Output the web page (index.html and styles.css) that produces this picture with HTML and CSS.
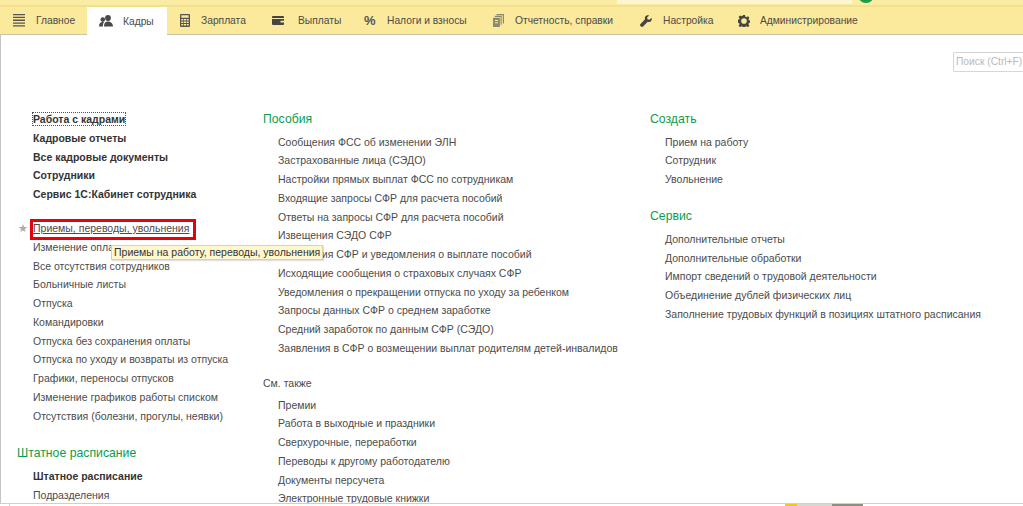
FILE: index.html
```html
<!DOCTYPE html>
<html>
	<head>
		<meta charset="utf-8" />
		<title>Кадры</title>
		<link rel="stylesheet" href="styles.css">
	</head>
	<body>
		<div class="top">
			<div class="top-field"></div>
			<div class="top-dot"></div>
		</div>
		<div class="menu">
			<div class="tab tab1">
				<svg width="12" height="13" viewBox="0 0 12 13"><path d="M0 0h12v1.300H0zM0 2.800h12v1.300H0zM0 5.600h12v1.300H0zM0 8.400h12v1.300H0zM0 11.200h12v1.300H0z" fill="#555"/></svg>
				<span>Главное</span>
			</div>
			<div class="tab tab2 active">
				<svg width="14" height="12" viewBox="0 0 14 12"><circle cx="9" cy="3" r="2.900" fill="#4a4a4a"/><path d="M5 11.500c0-3.600 1.600-5 4-5s4.800 1.400 5 5z" fill="#4a4a4a"/><circle cx="3.800" cy="4.600" r="2.300" fill="#4a4a4a"/><path d="M0 11.500c0-3 1.300-4.500 3.600-4.500.6 0 1 .1 1.400.3-.8 1-1.100 2.300-1.100 4.200z" fill="#4a4a4a"/></svg>
				<span>Кадры</span>
			</div>
			<div class="tab tab3">
				<svg width="10" height="13" viewBox="0 0 10 13"><path d="M1 0h8a1 1 0 0 1 1 1v11a1 1 0 0 1-1 1H1a1 1 0 0 1-1-1V1a1 1 0 0 1 1-1zm.300 1.300v2.400h7.400V1.300zM1.300 5v1.500h2V5zm2.700 0v1.500h2V5zm2.700 0v1.500h2V5zM1.300 7.500V9h2V7.500zm2.700 0V9h2V7.500zm2.700 0V9h2V7.500zM1.300 10v1.500h2V10zm2.700 0v1.500h2V10zm2.700 0v1.500h2V10z" fill="#555" fill-rule="evenodd"/></svg>
				<span>Зарплата</span>
			</div>
			<div class="tab tab4">
				<svg width="12" height="9" viewBox="0 0 12 9"><path d="M1 0h10a1 1 0 0 1 1 1v1H0V1a1 1 0 0 1 1-1zM0 3h12v1.800H8.500v1.700H12V8a1 1 0 0 1-1 1H1a1 1 0 0 1-1-1z" fill="#444"/></svg>
				<span>Выплаты</span>
			</div>
			<div class="tab tab5">
				<span class="percent">%</span>
				<span>Налоги и взносы</span>
			</div>
			<div class="tab tab6">
				<svg width="11" height="13" viewBox="0 0 11 13"><path d="M3.500 0H11v9.500H9.800V1.200H3.500z" fill="#8a8a70"/><path d="M1.800 1.800h6.900v8.900H7.600V3H1.800z" fill="#8a8a70"/><path d="M0 3.700h6.900V13H0zM2 6v1h3V6zm0 2.300v1h3v-1z" fill="#8a8a70" fill-rule="evenodd"/></svg>
				<span>Отчетность, справки</span>
			</div>
			<div class="tab tab7">
				<svg width="12" height="12" viewBox="0 0 14 14"><path d="M13.500 3.200 11 5.600 8.800 5 8.200 2.900 10.700.5C8.800-.2 6.800.4 6 2c-.5 1-.5 2.100-.1 3L.6 10.400a1.800 1.800 0 0 0 0 2.500l.5.500a1.800 1.800 0 0 0 2.500 0L9 8c1 .4 2.100.3 3-.2 1.500-.9 2.100-2.800 1.500-4.600z" fill="#444"/></svg>
				<span>Настройка</span>
			</div>
			<div class="tab tab8">
				<svg width="12" height="12" viewBox="0 0 14 14"><path d="M5.800 0h2.400l.4 2 1.300.6 1.700-1.100 1.700 1.700-1.100 1.700.5 1.300 2 .4v2.400l-2 .4-.5 1.300 1.100 1.700-1.700 1.700-1.700-1.100-1.300.5-.4 2H5.800l-.4-2-1.300-.5-1.700 1.100-1.700-1.700 1.100-1.700-.5-1.300-2-.4V5.600l2-.4.5-1.300-1.100-1.700 1.700-1.700 1.700 1.100 1.300-.6zM7 3.700a3.300 3.300 0 1 0 0 6.600 3.300 3.300 0 0 0 0-6.600z" fill="#444" fill-rule="evenodd"/></svg>
				<span>Администрирование</span>
			</div>
		</div>
		<div class="main">
			<div class="search-row"><div class="search">Поиск (Ctrl+F)</div></div>
			<div class="cols">
				<div class="col col1">
					<div class="list">
						<div class="item bold"><span class="focused">Работа с кадрами</span></div>
						<div class="item bold">Кадровые отчеты</div>
						<div class="item bold">Все кадровые документы</div>
						<div class="item bold">Сотрудники</div>
						<div class="item bold">Сервис 1С:Кабинет сотрудника</div>
					</div>
					<div class="list list-gap">
						<div class="item starred">
							<span class="star">★</span>
							<span class="hover-link">Приемы, переводы, увольнения</span>
							<div class="red-box"></div>
							<div class="tip">Приемы на работу, переводы, увольнения</div>
						</div>
						<div class="item">Изменение оплаты труда</div>
						<div class="item">Все отсутствия сотрудников</div>
						<div class="item">Больничные листы</div>
						<div class="item">Отпуска</div>
						<div class="item">Командировки</div>
						<div class="item">Отпуска без сохранения оплаты</div>
						<div class="item">Отпуска по уходу и возвраты из отпуска</div>
						<div class="item">Графики, переносы отпусков</div>
						<div class="item">Изменение графиков работы списком</div>
						<div class="item">Отсутствия (болезни, прогулы, неявки)</div>
					</div>
					<div class="heading heading-out">Штатное расписание</div>
					<div class="list">
						<div class="item bold">Штатное расписание</div>
						<div class="item">Подразделения</div>
					</div>
				</div>
				<div class="col col2">
					<div class="heading">Пособия</div>
					<div class="list sub">
						<div class="item">Сообщения ФСС об изменении ЭЛН</div>
						<div class="item">Застрахованные лица (СЭДО)</div>
						<div class="item">Настройки прямых выплат ФСС по сотрудникам</div>
						<div class="item">Входящие запросы СФР для расчета пособий</div>
						<div class="item">Ответы на запросы СФР для расчета пособий</div>
						<div class="item">Извещения СЭДО СФР</div>
						<div class="item">Извещения СФР и уведомления о выплате пособий</div>
						<div class="item">Исходящие сообщения о страховых случаях СФР</div>
						<div class="item">Уведомления о прекращении отпуска по уходу за ребенком</div>
						<div class="item">Запросы данных СФР о среднем заработке</div>
						<div class="item">Средний заработок по данным СФР (СЭДО)</div>
						<div class="item">Заявления в СФР о возмещении выплат родителям детей-инвалидов</div>
					</div>
					<div class="see-also">См. также</div>
					<div class="list sub">
						<div class="item">Премии</div>
						<div class="item">Работа в выходные и праздники</div>
						<div class="item">Сверхурочные, переработки</div>
						<div class="item">Переводы к другому работодателю</div>
						<div class="item">Документы персучета</div>
						<div class="item">Электронные трудовые книжки</div>
					</div>
				</div>
				<div class="col col3">
					<div class="heading">Создать</div>
					<div class="list sub">
						<div class="item">Прием на работу</div>
						<div class="item">Сотрудник</div>
						<div class="item">Увольнение</div>
					</div>
					<div class="heading heading-next">Сервис</div>
					<div class="list sub">
						<div class="item">Дополнительные отчеты</div>
						<div class="item">Дополнительные обработки</div>
						<div class="item">Импорт сведений о трудовой деятельности</div>
						<div class="item">Объединение дублей физических лиц</div>
						<div class="item">Заполнение трудовых функций в позициях штатного расписания</div>
					</div>
				</div>
			</div>
		</div>
		<div class="bottom">
			<div class="bottom-tick"></div>
			<div class="bottom-pic"></div>
		</div>
	</body>
</html>
```

FILE: styles.css
```css
*{
	margin: 0;
	padding: 0;
	box-sizing: border-box;
}
html,body{
	width: 1023px;
	height: 506px;
	overflow: hidden;
	background: #fff;
}
body{
	display: flex;
	flex-direction: column;
	font-family: "Liberation Sans", Arial, sans-serif;
	font-size: 10.500px;
	color: #4b4b4b;
}
.top{
	height: 7px;
	flex: none;
	display: flex;
	background: #fbeca4;
	border-bottom: 2px solid #f3e08e;
	overflow: hidden;
	padding-left: 617px;
}
.top-field{
	width: 235px;
	height: 4px;
	background: #fdf5d0;
}
.top-dot{
	width: 16px;
	height: 16px;
	margin: -13px 0 0 6px;
	border-radius: 50%;
	background: #1a9c4b;
}
.menu{
	height: 28px;
	flex: none;
	display: flex;
	background: #fbe99c;
	border-bottom: 1px solid #c9c4a6;
	font-size: 10.250px;
}
.tab{
	display: flex;
	align-items: center;
	flex: none;
	padding-left: 13px;
}
.tab svg{
	flex: none;
}
.tab1{ width: 87px; gap: 11px; }
.tab2{ width: 80px; padding-left: 12px; gap: 10px; }
.tab2.active{
	background: #fff;
	margin-bottom: -1px;
}
.tab3{ width: 92px; gap: 11px; }
.tab4{ width: 92px; gap: 14px; }
.tab5{ width: 129px; gap: 11px; }
.tab6{ width: 147px; gap: 11px; }
.tab7{ width: 98px; gap: 11px; }
.tab8{ gap: 10px; }
.percent{
	width: 12px;
	font-size: 13px;
	font-weight: bold;
	color: #555;
}
.main{
	flex: 1;
	min-height: 0;
	border-left: 1px solid #c4c4c4;
	overflow: hidden;
}
.search-row{
	display: flex;
	justify-content: flex-end;
	padding-top: 17px;
	height: 37px;
}
.search{
	width: 70px;
	height: 20px;
	border: 1px solid #d6d6d6;
	border-right: 0;
	border-radius: 2px 0 0 2px;
	padding-left: 2px;
	line-height: 18px;
	font-size: 10.250px;
	color: #b9b9b9;
	white-space: nowrap;
	overflow: hidden;
}
.cols{
	display: flex;
	padding-top: 38px;
}
.col1{ width: 261px; padding-left: 16px; flex: none; }
.col2{ width: 387px; flex: none; padding-left: 1px;}
.col3{ flex: 1; padding-left: 1px; }
.list{
	padding-left: 16px;
}
.list.sub{
	padding-left: 15px;
	padding-top: 3.600px;
}
.list-gap{
	margin-top: 15.400px;
}
.item{
	height: 18.750px;
	line-height: 18.750px;
	white-space: nowrap;
	position: relative;
}
.bold{
	font-weight: bold;
	color: #333;
}
.focused{
	outline: 1px dotted #555;
}
.heading{
	font-size: 12.250px;
	line-height: 19px;
	height: 19px;
	color: #0c9c4c;
}
.heading-out{
	margin-top: 18.600px;
	margin-bottom: 4px;
}
.heading-next{
	margin-top: 18.400px;
}
.see-also{
	margin-top: 16.400px;
	height: 18px;
	line-height: 19px;
}
.hover-link{
	text-decoration: underline;
}
.star{
	position: absolute;
	left: -15px;
	top: 0;
	font-size: 11px;
	color: #aaa;
}
.red-box{
	position: absolute;
	left: -3px;
	top: 0;
	width: 166px;
	height: 21px;
	border: 3px solid #e8000d;
}
.tip{
	position: absolute;
	left: 78px;
	top: 26px;
	height: 15px;
	line-height: 13px;
	padding: 0 2px;
	background: #fff8cf;
	border: 1px solid #d8d2a8;
	box-shadow: 1px 1px 1px rgba(0,0,0,.12);
	color: #333;
	z-index: 2;
}
.bottom{
	height: 3px;
	flex: none;
	display: flex;
	background: #fff;
	border-top: 1px solid #cfcfcf;
	padding-left: 9px;
}
.bottom-tick{
	width: 1px;
	background: #cfcfcf;
}
.bottom-pic{
	width: 78px;
	height: 2px;
	margin-left: 775px;
	background: linear-gradient(90deg, #f5c518 0 16%, #d8d8d0 16% 60%, #8f8f80 60%);
}
```
